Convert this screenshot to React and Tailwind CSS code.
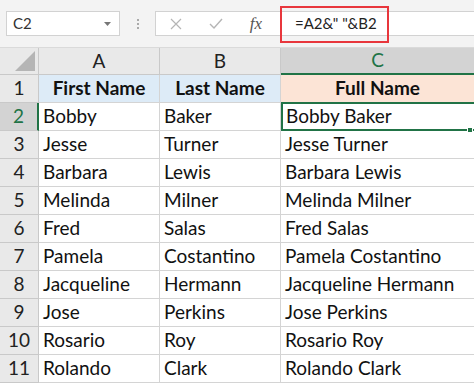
import React from 'react';

const rows = [
  ['Bobby', 'Baker'],
  ['Jesse', 'Turner'],
  ['Barbara', 'Lewis'],
  ['Melinda', 'Milner'],
  ['Fred', 'Salas'],
  ['Pamela', 'Costantino'],
  ['Jacqueline', 'Hermann'],
  ['Jose', 'Perkins'],
  ['Rosario', 'Roy'],
  ['Rolando', 'Clark'],
];

const font = { fontFamily: 'Lato, "Open Sans", sans-serif' };

function Toolbar() {
  return (
    <div className="h-[48px] bg-[#f3f3f3] flex items-center pl-[6px] border-b border-[#dadada]">
      {/* name box */}
      <div className="w-[114px] h-[25px] bg-white border border-[#d2d2d2] flex items-center justify-between pl-[6px] pr-[8px]">
        <span className="text-[15px] text-[#333]">C2</span>
        <svg width="7" height="4" viewBox="0 0 7 4"><path d="M0 0h7L3.5 4z" fill="#777" /></svg>
      </div>
      {/* grip */}
      <div className="w-[35px] flex flex-col items-center gap-[2px]">
        <span className="w-[2px] h-[2px] bg-[#aaa]" />
        <span className="w-[2px] h-[2px] bg-[#aaa]" />
        <span className="w-[2px] h-[2px] bg-[#aaa]" />
      </div>
      {/* formula bar */}
      <div className="relative flex-1 h-[25px] bg-white border border-[#d2d2d2] border-r-0 flex items-center">
        <div className="w-[40px] flex justify-center">
          <svg width="12" height="12" viewBox="0 0 12 12"><path d="M1 1l10 10M11 1L1 11" stroke="#b5b5b5" strokeWidth="1.2" /></svg>
        </div>
        <div className="w-[40px] flex justify-center">
          <svg width="14" height="11" viewBox="0 0 14 11"><path d="M1 6l4 4L13 1" stroke="#b5b5b5" strokeWidth="1.4" fill="none" /></svg>
        </div>
        <div className="w-[40px] flex justify-center">
          <span className="text-[17px] italic text-[#555]" style={{ fontFamily: '"Liberation Serif", serif' }}>fx</span>
        </div>
        <span className="ml-[19px] text-[15px] text-[#222]">=A2&amp;" "&amp;B2</span>
        <div className="absolute left-[124px] top-[-6px] w-[109px] h-[37px] border-2 border-[#e8363c]" />
      </div>
    </div>
  );
}

export default function App() {
  return (
    <div className="w-[474px] h-[383px] overflow-hidden bg-white flex flex-col" style={font}>
      <Toolbar />
      {/* column headers */}
      <div className="flex h-[27px] bg-[#e9e9e9] text-[19px] text-[#222]">
        <div className="w-[39px] shrink-0 border-r border-b border-[#c9c9c9] relative">
          <svg className="absolute right-[3px] bottom-[3px]" width="20" height="20" viewBox="0 0 20 20"><path d="M20 0v20H0z" fill="#b5b5b5" /></svg>
        </div>
        <div className="w-[121px] shrink-0 border-r border-b border-[#c9c9c9] flex items-center justify-center">A</div>
        <div className="w-[121px] shrink-0 border-r border-b border-[#c9c9c9] flex items-center justify-center">B</div>
        <div className="flex-1 bg-[#d3d3d3] border-b-2 border-[#217346] flex items-center justify-center text-[#217346]">C</div>
      </div>
      {/* row 1 */}
      <div className="flex h-[28px] text-[19px] font-bold text-[#111]">
        <div className="w-[39px] shrink-0 bg-[#e9e9e9] border-r border-b border-[#c9c9c9] flex items-center justify-center font-normal text-[#222]">1</div>
        <div className="w-[121px] shrink-0 bg-[#ddebf7] border-r border-b border-[#d4d4d4] flex items-center justify-center">First Name</div>
        <div className="w-[121px] shrink-0 bg-[#ddebf7] border-r border-b border-[#d4d4d4] flex items-center justify-center">Last Name</div>
        <div className="flex-1 bg-[#fce4d6] border-b border-[#d4d4d4] flex items-center justify-center">Full Name</div>
      </div>
      {rows.map(([first, last], i) => {
        const n = i + 2;
        const sel = n === 2;
        return (
          <div key={n} className="flex h-[28px] shrink-0 text-[19px] text-[#111]">
            <div className={sel
              ? 'w-[39px] shrink-0 bg-[#d3d3d3] border-r-2 border-r-[#217346] border-b border-b-[#c9c9c9] flex items-center justify-center text-[#217346]'
              : 'w-[39px] shrink-0 bg-[#e9e9e9] border-r border-b border-[#c9c9c9] flex items-center justify-center text-[#222]'}>
              {n}
            </div>
            <div className="w-[121px] shrink-0 border-r border-b border-[#d4d4d4] flex items-center pl-[4px]">{first}</div>
            <div className="w-[121px] shrink-0 border-r border-b border-[#d4d4d4] flex items-center pl-[4px]">{last}</div>
            <div className={sel
              ? 'relative flex-1 border-2 border-[#217346] border-r-0 flex items-center pl-[3px] mt-[-1px]'
              : 'flex-1 border-b border-[#d4d4d4] flex items-center pl-[4px]'}>
              {first} {last}
              {sel && <span className="absolute right-[1px] bottom-[-4px] w-[6px] h-[6px] bg-[#217346] border border-white" />}
            </div>
          </div>
        );
      })}
    </div>
  );
}
